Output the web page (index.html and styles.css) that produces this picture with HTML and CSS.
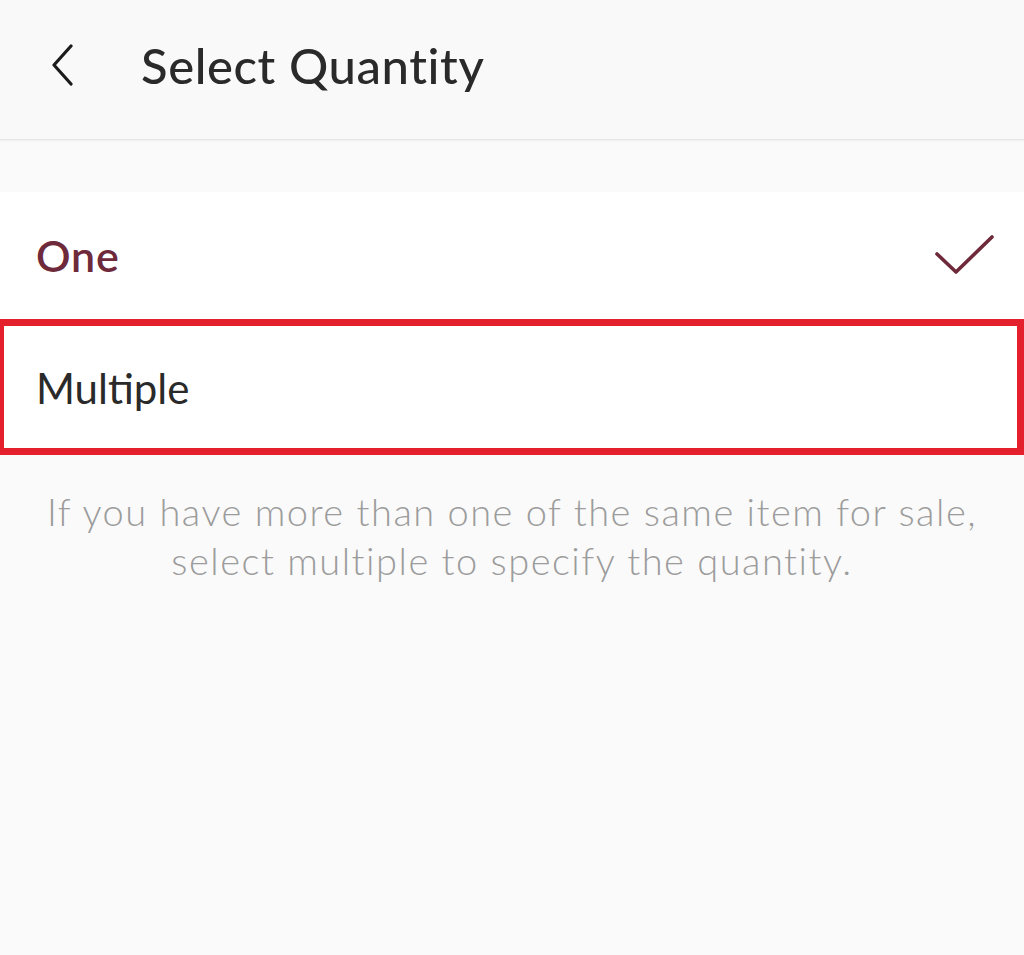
FILE: index.html
```html
<!DOCTYPE html>
<html lang="en">
<head>
<meta charset="utf-8">
<title>Select Quantity</title>
<link rel="stylesheet" href="styles.css">
</head>
<body>
<header class="topbar">
  <button class="back" aria-label="Back">
    <svg width="26" height="42" viewBox="0 0 26 42"><path d="M21 2 L4 21 L21 40" fill="none" stroke="#1c1c1c" stroke-width="3.2" stroke-linecap="round" stroke-linejoin="round"/></svg>
  </button>
  <h1 class="title">Select Quantity</h1>
</header>
<div class="spacer"></div>
<ul class="options">
  <li class="option selected">
    <span class="label">One</span>
    <svg class="check" width="60" height="42" viewBox="0 0 60 42"><path d="M2 20 L21 38 L57 3" fill="none" stroke="#6e2a3a" stroke-width="3.6" stroke-linecap="round" stroke-linejoin="round"/></svg>
  </li>
  <li class="option highlight">
    <span class="label">Multiple</span>
  </li>
</ul>
<p class="hint">If you have more than one of the same item for sale,<br>select multiple to specify the quantity.</p>
</body>
</html>
```
FILE: styles.css
```css
html, body {
  margin: 0;
  padding: 0;
}
body {
  background: #fafafa;
  font-family: Lato, "Liberation Sans", sans-serif;
  width: 1024px;
  height: 955px;
  overflow: hidden;
}
.topbar {
  display: flex;
  align-items: center;
  padding: 0 0 10px 0;
  box-sizing: border-box;
  height: 140px;
  background: #f9f9f9;
  border-bottom: 1px solid #e6e6e6;
  box-shadow: 0 1px 2px rgba(0,0,0,0.05);
}
.back {
  background: none;
  border: 0;
  padding: 0;
  margin-left: 50px;
  width: 26px;
  height: 42px;
  display: flex;
}
.title {
  margin: 0 0 0 65px;
  font-size: 49px;
  font-weight: 500;
  color: #2a2a2a;
  letter-spacing: 0.6px;
}
.spacer {
  height: 52px;
}
.options {
  list-style: none;
  margin: 0;
  padding: 0;
  background: #fff;
}
.option {
  display: flex;
  align-items: center;
  justify-content: space-between;
  height: 127px;
  padding: 0 29px 0 36px;
  box-sizing: border-box;
}
.label {
  font-size: 42px;
}
.selected .label {
  color: #6e2a3a;
  font-weight: 600;
  font-size: 43px;
  letter-spacing: 0.8px;
}
.check {
  margin-top: -2px;
}
.highlight {
  height: 136px;
  border: 7px solid #e3202b;
  margin-left: -3px;
  padding-left: 32px;
}
.highlight .label {
  color: #2a2a2a;
  font-weight: 400;
  margin-top: 2px;
}
.hint {
  margin: 32px 0 0 0;
  text-align: center;
  font-size: 38px;
  line-height: 49px;
  font-weight: 300;
  letter-spacing: 1.5px;
  color: #9c9c9c;
}
```
